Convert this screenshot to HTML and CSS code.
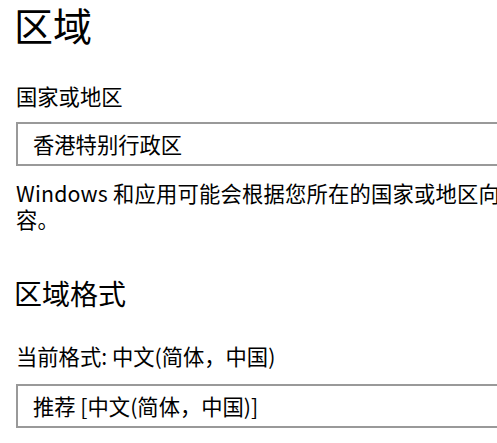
FILE: index.html
```html
<!DOCTYPE html>
<html lang="zh-CN">
<head>
<meta charset="utf-8">
<link rel="stylesheet" href="styles.css">
</head>
<body>
<main class="page">
  <h1 class="title">区域</h1>
  <div class="label">国家或地区</div>
  <div class="select">香港特别行政区</div>
  <p class="desc">Windows 和应用可能会根据您所在的国家或地区向您提供本地内容。</p>
  <h2 class="subtitle">区域格式</h2>
  <div class="label label-format">当前格式: 中文(简体，中国)</div>
  <div class="select select-format">推荐 [中文(简体，中国)]</div>
</main>
</body>
</html>
```
FILE: styles.css
```css
html, body {
  margin: 0;
  padding: 0;
  background: #ffffff;
  overflow: hidden;
}
body {
  font-family: "Noto Sans CJK SC", "Noto Sans", sans-serif;
  color: #000000;
  width: 497px;
  height: 443px;
}
.page {
  width: 700px;
  padding: 0 0 0 16px;
}
.title {
  margin: 0 0 0 -2px;
  font-size: 39px;
  font-weight: 400;
  line-height: 48px;
}
.label {
  font-size: 21.3px;
  line-height: 28px;
  margin-top: 34px;
}
.select {
  margin-top: 12px;
  height: 40px;
  border: 2px solid #999999;
  box-sizing: content-box;
  padding: 0 0 0 15px;
  font-size: 21.3px;
  line-height: 40px;
  width: 600px;
}
.desc {
  margin: 14px 0 0 0;
  font-size: 21.3px;
  line-height: 26px;
  width: 620px;
  letter-spacing: 0.2px;
}
.subtitle {
  margin: 42px 0 0 -2px;
  font-size: 28px;
  font-weight: 400;
  line-height: 38px;
}
.label-format {
  margin-top: 30px;
}
.select-format {
  margin-top: 14px;
}
```
